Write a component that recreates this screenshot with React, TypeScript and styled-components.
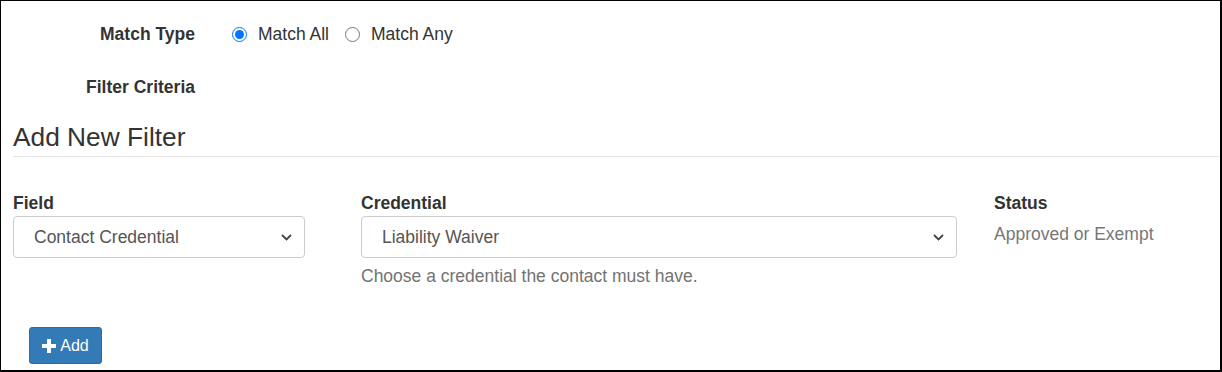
import React, { FC } from 'react';
import styled, { createGlobalStyle } from 'styled-components';

const Global = createGlobalStyle`
  html, body {
    margin: 0;
    padding: 0;
    background: #fff;
  }
  body {
    font-family: "Liberation Sans", Arial, sans-serif;
    color: #333;
  }
`;

const Frame = styled.div`
  box-sizing: border-box;
  width: 1222px;
  height: 372px;
  border-top: 1px solid #000;
  border-left: 1px solid #000;
  border-right: 2px solid #000;
  border-bottom: 2px solid #000;
  overflow: hidden;
`;

const Top = styled.div`
  padding-top: 20px;
`;

const FormRow = styled.div<{ $gap?: number }>`
  display: grid;
  grid-template-columns: 194px 1fr;
  column-gap: 37px;
  align-items: center;
  height: 26px;
  margin-top: ${(p) => p.$gap ?? 0}px;
`;

const RowLabel = styled.div`
  font-size: 17.5px;
  font-weight: bold;
  text-align: right;
  color: #333;
`;

const Radios = styled.div`
  display: flex;
  align-items: center;
  gap: 16px;
`;

const RadioLabel = styled.label`
  display: flex;
  align-items: center;
  gap: 11px;
  font-size: 17.5px;
  color: #333;
`;

const Radio = styled.input`
  width: 15px;
  height: 15px;
  margin: 0;
  accent-color: #0075ff;
`;

const Section = styled.div`
  padding-top: 22px;
`;

const Heading = styled.h3`
  margin: 0 0 0 12px;
  font-size: 26.3px;
  font-weight: normal;
  line-height: 30px;
  color: #333;
  padding-bottom: 4px;
  border-bottom: 1px solid #e5e5e5;
`;

const Columns = styled.div`
  display: grid;
  grid-template-columns: 348px 633px 1fr;
  padding-left: 12px;
  margin-top: 36px;
`;

const Col = styled.div<{ $w?: number }>`
  display: flex;
  flex-direction: column;
  ${(p) => (p.$w ? `width: ${p.$w}px;` : '')}
`;

const FieldLabel = styled.div`
  font-size: 17.5px;
  font-weight: bold;
  color: #333;
  line-height: 20px;
  margin-bottom: 3px;
`;

const SelectBox = styled.div`
  box-sizing: border-box;
  height: 42px;
  border: 1px solid #ccc;
  border-radius: 4px;
  display: flex;
  align-items: center;
  justify-content: space-between;
  padding: 0 12px 0 20px;
  font-size: 17.5px;
  color: #555;
  background: #fff;
`;

const Help = styled.div`
  margin-top: 8px;
  font-size: 17.5px;
  color: #737373;
`;

const StaticValue = styled.div`
  margin-top: 8px;
  font-size: 17.5px;
  color: #777;
`;

const Footer = styled.div`
  padding: 40px 0 0 28px;
`;

const AddButton = styled.button`
  box-sizing: border-box;
  width: 73px;
  height: 37px;
  background: #337ab7;
  border: 1px solid #2e6da4;
  border-radius: 3px;
  color: #fff;
  font-family: "Liberation Sans", Arial, sans-serif;
  font-size: 16px;
  display: flex;
  align-items: center;
  justify-content: center;
  gap: 4px;
  padding: 0;
`;

const Chevron: FC = () => (
  <svg width="11" height="7" viewBox="0 0 11 7">
    <path d="M1 1l4.5 4.5L10 1" fill="none" stroke="#444" strokeWidth="1.8" />
  </svg>
);

const Plus: FC = () => (
  <svg width="14" height="14" viewBox="0 0 14 14">
    <path d="M5 0h4v5H14v4H9V14H5V9H0V5h5z" fill="#fff" />
  </svg>
);

const App: FC = () => {
  return (
    <Frame>
      <Global />
      <Top>
        <FormRow>
          <RowLabel>Match Type</RowLabel>
          <Radios>
            <RadioLabel>
              <Radio type="radio" name="match" defaultChecked />
              Match All
            </RadioLabel>
            <RadioLabel>
              <Radio type="radio" name="match" />
              Match Any
            </RadioLabel>
          </Radios>
        </FormRow>
        <FormRow $gap={27}>
          <RowLabel>Filter Criteria</RowLabel>
          <div />
        </FormRow>
      </Top>
      <Section>
        <Heading>Add New Filter</Heading>
        <Columns>
          <Col $w={292}>
            <FieldLabel>Field</FieldLabel>
            <SelectBox>
              Contact Credential
              <Chevron />
            </SelectBox>
          </Col>
          <Col $w={596}>
            <FieldLabel>Credential</FieldLabel>
            <SelectBox>
              Liability Waiver
              <Chevron />
            </SelectBox>
            <Help>Choose a credential the contact must have.</Help>
          </Col>
          <Col>
            <FieldLabel>Status</FieldLabel>
            <StaticValue>Approved or Exempt</StaticValue>
          </Col>
        </Columns>
        <Footer>
          <AddButton>
            <Plus />
            Add
          </AddButton>
        </Footer>
      </Section>
    </Frame>
  );
};

export default App;
